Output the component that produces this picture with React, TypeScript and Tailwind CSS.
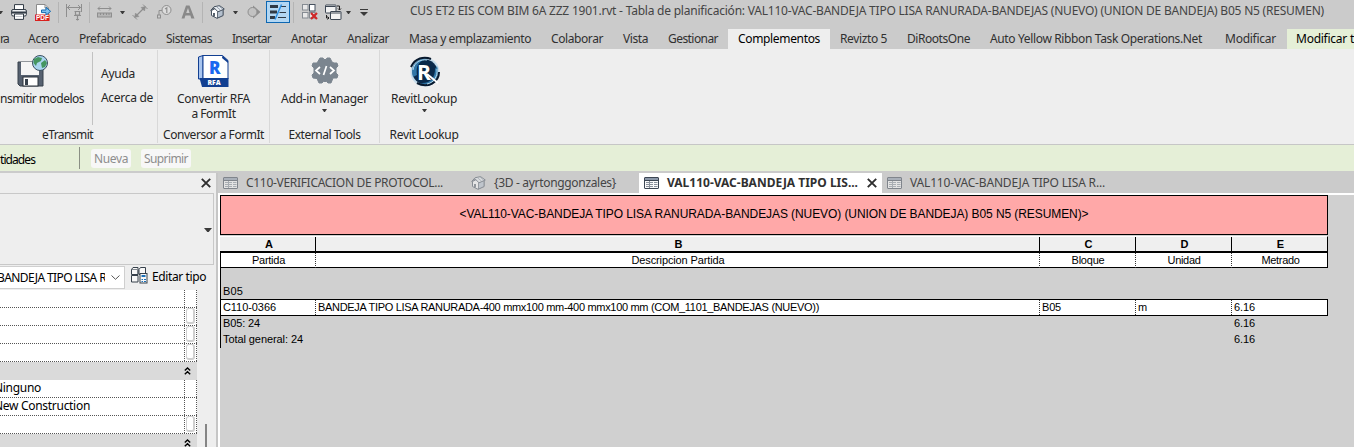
import { useLayoutEffect, useRef, useState } from "react";
import type { ReactNode } from "react";

/* A single-line label that is tracked so that it fills exactly `w` pixels. */
function Label({ w, children, className = "" }: { w: number; children: string; className?: string }) {
  const ref = useRef<HTMLSpanElement>(null);
  const [spacing, setSpacing] = useState(0);
  useLayoutEffect(() => {
    if (ref.current) {
      const natural = ref.current.getBoundingClientRect().width;
      setSpacing((w - natural) / children.length);
    }
  }, [w, children]);
  return (
    <span className={`inline-block shrink-0 whitespace-pre ${className}`} style={{ width: w }}>
      <span ref={ref} style={{ letterSpacing: spacing }}>
        {children}
      </span>
    </span>
  );
}

const Sep = ({ className = "" }: { className?: string }) => (
  <div className={`h-[21px] w-px shrink-0 bg-[#b4b4b4] ${className}`} />
);

const Caret = ({ className = "", size = 5 }: { className?: string; size?: number }) => (
  <svg className={`shrink-0 ${className}`} width={size} height={size > 5 ? 4 : 3} viewBox="0 0 6 3" preserveAspectRatio="none">
    <path d="M0 0H6L3.500 3H2.500Z" fill="#3a3a3a" />
  </svg>
);

const ScheduleIcon = ({ dim = false }: { dim?: boolean }) => (
  <svg className="shrink-0" width="15" height="12" viewBox="0 0 15 12" opacity={dim ? 0.52 : 1}>
    <rect x="0.500" y="0.500" width="14" height="11" rx="0.500" fill="#fafafa" stroke="#3c4653" />
    <rect x="1" y="1" width="13" height="2" fill="#8b98a9" />
    <path d="M1 3.500H14" stroke="#3c4653" />
    <path d="M2 5.500H5M6 5.500H9M10 5.500H13.500M2 7.500H5M6 7.500H9M10 7.500H13.500M2 9.500H5M6 9.500H9M10 9.500H13.500" stroke="#8a929c" />
    <path d="M5.500 4V11" stroke="#8a929c" />
  </svg>
);

const CloseIcon = ({ className = "" }: { className?: string }) => (
  <svg className={`shrink-0 ${className}`} width="10" height="10" viewBox="0 0 10 10">
    <path d="M0.800 0.800L9.200 9.200M9.200 0.800L0.800 9.200" stroke="#2e2e2e" strokeWidth="1.900" />
  </svg>
);

const House = ({ dim = false }: { dim?: boolean }) => (
  <svg className="shrink-0" width="15" height="14" viewBox="0 0 15 14" opacity={dim ? 0.5 : 1}>
    <path d="M1.500 5.500V10.500L7 13.300L13 10.500V5L8 2Z" fill="#fff" stroke="#46515e" />
    <path d="M7.500 6.500L13 4.500V10.500L7.500 13Z" fill="#b4c0ce" stroke="#46515e" strokeWidth=".8" />
    <path d="M0.700 5.500L4 1.800L9.500 0.600L14.300 4L8 6.800L4 2.800Z" fill="#e9edf2" stroke="#46515e" />
    <path d="M6.500 1.800L10.500 5M9 1L12.500 4" stroke="#7d8b9b" strokeWidth=".8" />
    <path d="M4 8V11.500" stroke="#46515e" strokeWidth="1.800" />
  </svg>
);

function QuickAccess() {
  return (
    <div className="flex h-6 w-[410px] shrink-0 items-center">
      <Caret className="-ml-0.5" size={5} />
      <svg className="ml-2 shrink-0" width="16" height="16" viewBox="0 0 16 16">
        <path d="M3.500 6V0.600H12.500V6" fill="#fff" stroke="#333c46" />
        <rect x="0.600" y="5.500" width="14.800" height="6.500" rx="1.500" fill="#eceef0" stroke="#333c46" />
        <path d="M1 8.500H15" stroke="#333c46" strokeWidth="2" />
        <path d="M3.500 10H12.500V15.400H3.500Z" fill="#fff" stroke="#333c46" />
        <path d="M4.500 12.500H11.500" stroke="#c4c9cf" />
      </svg>
      <svg className="ml-2 shrink-0" width="16" height="17" viewBox="0 0 16 17">
        <path d="M1.500 11V0.500H10L13.500 4V11" fill="#fff" stroke="#8b8b8b" />
        <path d="M10 0.500V4H13.500" fill="none" stroke="#8b8b8b" />
        <rect x="0" y="10.500" width="14.500" height="6.500" fill="#d9201d" />
        <path d="M6.500 6H11V3.300L15.600 7.300L11 11.300V8.600H6.500Z" fill="#7fc0f0" stroke="#1469ae" />
        <text x="1" y="16.200" fontSize="6.500" fontWeight="700" fill="#fff" fontFamily="Liberation Sans, sans-serif">PDF</text>
      </svg>
      <Sep className="ml-[7px]" />
      <svg className="ml-[7px] shrink-0" width="17" height="17" viewBox="0 0 17 17" fill="none" stroke="#8e8e8e">
        <path d="M0.500 0V13M15.500 0V8M1 3.500H15" />
        <path d="M4 1L1.500 3.500L4 6M12 1L14.500 3.500L12 6" />
        <path d="M8.500 7.500H14.500M9.500 8V11H13.500V8M8 11.500H15M11.500 12V16.500M10 15.500H13" strokeWidth="1.200" />
      </svg>
      <Sep className="ml-[6px]" />
      <svg className="ml-[7px] shrink-0" width="15" height="12" viewBox="0 0 15 12" fill="none" stroke="#8e8e8e">
        <path d="M1 2.500H14M3 0.500L1 2.500L3 4.500M12 0.500L14 2.500L12 4.500" />
        <rect x="0.500" y="7" width="14" height="4" fill="#b5b5b5" />
        <path d="M3.500 7V9M6.500 7V9M9.500 7V9M12 7V9" />
      </svg>
      <Caret className="ml-2" size={5} />
      <svg className="ml-[7px] shrink-0" width="16" height="16" viewBox="0 0 16 16" fill="none" stroke="#8e8e8e">
        <path d="M3.500 12.500L12.500 3.500" strokeWidth="1.300" />
        <path d="M13.500 2.500L9 3.500L12.500 7ZM2.500 13.500L3.500 9L7 12.500Z" fill="#8e8e8e" strokeWidth=".5" />
        <path d="M0.500 11L5 15.500M11 0.500L15.500 5" />
      </svg>
      <svg className="ml-[9px] shrink-0" width="15" height="14" viewBox="0 0 15 14" fill="none" stroke="#8e8e8e">
        <circle cx="9.500" cy="5" r="4.500" fill="#dcdcdc" />
        <path d="M8 4L9.800 2.800V8" strokeWidth="1.200" />
        <path d="M5 5.500H2V10" />
        <rect x="0.500" y="10" width="3" height="3" />
      </svg>
      <svg className="ml-[9px] shrink-0" width="14" height="14" viewBox="0 0 14 14">
        <path d="M0.500 13.500L5 0.500H8.500L13.500 13.500H10.300L9.400 10.500H4.400L3.500 13.500ZM5.200 8H8.600L7 3Z" fill="#898989" fillRule="evenodd" />
      </svg>
      <Sep className="ml-[7px]" />
      <div className="ml-[7px]"><House /></div>
      <Caret className="ml-2" size={5} />
      <svg className="ml-[9px] shrink-0" width="14" height="14" viewBox="0 0 14 14">
        <path d="M6 0.500L13.500 7L6 13.500Z" fill="#8e8e8e" />
        <circle cx="5.500" cy="7" r="4.500" fill="#c2c2c2" stroke="#8e8e8e" />
      </svg>
      <svg className="ml-[5px] shrink-0" width="24" height="22" viewBox="0 0 24 22">
        <rect x="0.500" y="0.500" width="23" height="21" fill="#b3d7f3" stroke="#0d67b2" />
        <path d="M4 5.500H12" stroke="#303a45" strokeWidth="3" />
        <path d="M4 11H11" stroke="#303a45" strokeWidth="3" />
        <path d="M4 16.500H9" stroke="#303a45" strokeWidth="3" />
        <path d="M15 5.500H20M13.500 11.500H20M12 16.500H20" stroke="#303a45" />
        <path d="M9 18.500L15.500 3.500" stroke="#2a8de0" strokeWidth="1.400" />
      </svg>
      <Sep className="ml-[3px]" />
      <svg className="ml-2 shrink-0" width="16" height="16" viewBox="0 0 16 16">
        <g fill="#e8e8e8" stroke="#858b92">
          <rect x="0.500" y="0.500" width="5.500" height="5.500" />
          <rect x="7.500" y="0.500" width="5.500" height="6.500" fill="#fff" stroke="#46515e" />
          <rect x="0.500" y="8.500" width="5.500" height="5.500" />
          <rect x="7.500" y="8.500" width="5.500" height="5.500" />
        </g>
        <path d="M9 9L15 15M15 9L9 15" stroke="#cf2727" strokeWidth="2.200" />
      </svg>
      <svg className="ml-[7px] shrink-0" width="17" height="17" viewBox="0 0 17 17">
        <rect x="0.500" y="1" width="10.500" height="8" rx="0.500" fill="#f2f2f2" stroke="#3c4653" />
        <path d="M1 2.500H10.500" stroke="#3c4653" />
        <rect x="5.500" y="7.500" width="10.500" height="8" rx="0.500" fill="#f2f2f2" stroke="#3c4653" />
        <path d="M6 9H15.500" stroke="#3c4653" />
        <path d="M12 2H14.500V6M13 4.500L14.500 6L16 4.500M1.500 11V14H4M2.500 12.500L4 14L2.500 15.500" fill="none" stroke="#222" />
      </svg>
      <Caret className="ml-1" size={5} />
      <svg className="ml-[9px] shrink-0" width="8" height="7" viewBox="0 0 8 7">
        <path d="M0 0.500H8" stroke="#3a3a3a" />
        <path d="M0 3H8L4 7Z" fill="#3a3a3a" />
      </svg>
    </div>
  );
}

const ribbonTabs: [string, number][] = [
  ["Acero", 31],
  ["Prefabricado", 67],
  ["Sistemas", 46],
  ["Insertar", 39],
  ["Anotar", 36],
  ["Analizar", 42],
  ["Masa y emplazamiento", 122],
  ["Colaborar", 52],
  ["Vista", 25],
  ["Gestionar", 50],
];

function RibbonTabs() {
  return (
    <div className="flex h-[25px] items-end text-[#303030]">
      <div className="flex h-5 items-center gap-5">
        <Label w={8}>ra</Label>
        {ribbonTabs.map(([name, w]) => (
          <Label key={name} w={w}>{name}</Label>
        ))}
      </div>
      <div className="ml-[10px] flex h-5 w-[102px] items-center bg-[#eee] pl-[10px] text-black">
        <Label w={82}>Complementos</Label>
      </div>
      <div className="flex h-5 items-center gap-5 pl-[10px]">
        <Label w={47}>Revizto 5</Label>
        <Label w={63}>DiRootsOne</Label>
        <Label w={212}>Auto Yellow Ribbon Task Operations.Net</Label>
        <Label w={51} className="ml-[3px]">Modificar</Label>
      </div>
      <div className="ml-[11px] flex h-5 grow items-center overflow-hidden bg-[#e5efd7] pl-[9px] text-black">
        <Label w={58}>Modificar t</Label>
      </div>
    </div>
  );
}

function Panel({ title, titleW, className, children }: { title: string; titleW: number; className: string; children: ReactNode }) {
  return (
    <div className={`flex shrink-0 flex-col items-center ${className}`}>
      <div className="flex h-[76px] flex-col items-center">{children}</div>
      <div className="flex h-[19px] items-center">
        <Label w={titleW}>{title}</Label>
      </div>
    </div>
  );
}

const Divider = () => <div className="mt-px h-[93px] w-px shrink-0 bg-[#d8d8d8]" />;

function Ribbon() {
  return (
    <div className="flex h-24 border-b border-[#c6c6c6] bg-[#eee] text-[#262626]">
      <div className="flex w-[157px] shrink-0 flex-col">
        <div className="flex h-[76px]">
          <div className="flex w-[92px] flex-col">
            <svg className="mt-1.5 ml-[17px]" width="32" height="32" viewBox="0 0 32 32">
              <path d="M1 7H26V31H3L1 29Z" fill="#566170" stroke="#36404b" />
              <rect x="4" y="7" width="18" height="13" fill="#f5f5f5" />
              <rect x="6" y="22" width="15" height="9" fill="#fff" stroke="#2a323b" />
              <rect x="8" y="24" width="3" height="6" fill="#36404b" />
              <circle cx="23" cy="8" r="7.500" fill="#a9d5ef" stroke="#3b4f60" />
              <path d="M17 4L21 2L25 3L24 6L20 8L19 11L16.500 8ZM24 8L28 5L30 8L28 12L25 13Z" fill="#459660" />
            </svg>
            <div className="flex h-6 items-center">
              <Label w={84}>nsmitir modelos</Label>
            </div>
          </div>
          <div className="mt-[3px] h-[73px] w-px shrink-0 bg-[#c2c2c2]" />
          <div className="flex flex-col pt-[13px] pl-2">
            <div className="flex h-6 items-center"><Label w={34}>Ayuda</Label></div>
            <div className="flex h-6 items-center"><Label w={52}>Acerca de</Label></div>
          </div>
        </div>
        <div className="flex h-[19px] items-center pl-[42px]">
          <Label w={51}>eTransmit</Label>
        </div>
      </div>
      <Divider />
      <Panel title="Conversor a FormIt" titleW={101} className="w-[111px]">
        <svg className="mt-1.5" width="31" height="33" viewBox="0 0 31 33">
          <path d="M0.500 2L5 0.500V24H0.500Z" fill="#a9c5ef" stroke="#123f91" />
          <path d="M5 0.500H24.500L30 5.500V24H5Z" fill="#fff" stroke="#123f91" />
          <path d="M24.500 0.500L30 5.500V8L24 3Z" fill="#123f91" />
          <path d="M1.500 23H30.500V32H4Z" fill="#123f91" />
          <text x="11" y="18.500" fontFamily="Open Sans, sans-serif" fontWeight="800" fontSize="17" fill="#1a68f0">R</text>
          <text x="9.500" y="30" fontFamily="Open Sans, sans-serif" fontWeight="800" fontSize="6.800" fill="#fff">RFA</text>
        </svg>
        <div className="mt-[3px] flex h-[15px] items-center"><Label w={73}>Convertir RFA</Label></div>
        <div className="flex h-[15px] items-center"><Label w={44}>a FormIt</Label></div>
      </Panel>
      <Divider />
      <Panel title="External Tools" titleW={72} className="w-[109px]">
        <svg className="mt-[8px]" width="28" height="27" viewBox="0 0 28 27">
          <path d="M9 1H12L13 2.500H15L16 1H19L21 5L23 6L26 6L27 9L25 11V16L27 18L26 21L22 21L20 26L17 26L15.500 24.500H12.500L11 26L8 26L6 21.500L2 21L1 18L3 16V11L1 9L2 6L6 6Z" fill="#7b858f" stroke="#7b858f" strokeLinejoin="round" />
          <path d="M9 10L5 13.500L9 17M19 10L23 13.500L19 17M15.500 9L12.500 18" fill="none" stroke="#fff" strokeWidth="1.700" />
        </svg>
        <div className="mt-[7px] flex h-[15px] items-center"><Label w={87}>Add-in Manager</Label></div>
        <Caret className="mt-[3px]" size={5} />
      </Panel>
      <Divider />
      <Panel title="Revit Lookup" titleW={69} className="w-[88px]">
        <svg className="mt-1.5" width="33" height="33" viewBox="0 0 33 33">
          <circle cx="17" cy="17" r="14.500" fill="#c5dceb" />
          <circle cx="17" cy="17" r="12.500" fill="#09294a" />
          <path d="M5 22C1 8 13 1 23 4C9 4 8 13 9 20ZM29 11C33 24 23 32 12 28C23 29 27 22 27 14Z" fill="#2f76a7" />
          <path d="M3 12C7 3 16 1 23 4M31 17C31 27 20 34 9 28" fill="none" stroke="#07182c" strokeWidth="2" />
          <path d="M5 15C6 7 13 4 19 5M29 14C30 22 25 28 19 29" fill="none" stroke="#b8dcf0" />
          <text x="9" y="24.500" fontFamily="Open Sans, sans-serif" fontWeight="700" fontSize="21" fill="#fff">R</text>
          <path d="M19 19L30 28" stroke="#fff" strokeWidth="1.800" />
        </svg>
        <div className="mt-[3px] flex h-[15px] items-center"><Label w={66}>RevitLookup</Label></div>
        <Caret className="mt-[3px]" size={5} />
      </Panel>
    </div>
  );
}

function OptionsBar() {
  return (
    <div className="flex h-[28px] items-center border-b-2 border-[#cbcbcb] bg-[#e5efd7] pt-px">
      <div className="pt-0.5 text-black">
        <Label w={35}>tidades</Label>
      </div>
      <div className="ml-11 h-[22px] w-px bg-[#8a8f84]" />
      <div className="ml-[11px] flex h-[19px] w-10 items-center justify-center rounded-[3px] bg-[#f7f7f7] pt-px text-[#8d8d8d]">
        <Label w={34}>Nueva</Label>
      </div>
      <div className="ml-[10px] flex h-[19px] w-[50px] items-center justify-center rounded-[3px] bg-[#f7f7f7] pt-px text-[#8d8d8d]">
        <Label w={44}>Suprimir</Label>
      </div>
    </div>
  );
}

function PropertyRow({ text, w = 0, button = false, clip = 0 }: { text?: string; w?: number; button?: boolean; clip?: number }) {
  return (
    <div className="flex h-[18px] shrink-0 border-b border-dotted border-[#555] bg-white">
      <div className="flex w-[184px] items-center overflow-hidden text-black">
        {text && (
          <div className="-mt-px" style={{ marginLeft: -clip }}>
            <Label w={w}>{text}</Label>
          </div>
        )}
      </div>
      <div className="flex w-[13px] items-center justify-center border-x border-dotted border-[#555]">
        {button && <div className="h-4 w-[9px] rounded-[3px] border border-r-2 border-b-2 border-[#cfcfcf] bg-white" />}
      </div>
    </div>
  );
}

const GroupRow = () => (
  <div className="flex h-[18px] shrink-0 items-center justify-end bg-[#dadada] pr-[6px]">
    <svg width="7" height="8" viewBox="0 0 7 8">
      <path d="M0.800 3.500L3.500 1L6.200 3.500M0.800 7.300L3.500 4.800L6.200 7.300" fill="none" stroke="#000" strokeWidth="1.400" />
    </svg>
  </div>
);

function Properties() {
  return (
    <div className="flex w-[218px] shrink-0 flex-col overflow-hidden border-r-2 border-[#c6c6c6] bg-[#eee]">
      <div className="flex h-5 shrink-0 items-center justify-end pr-[5px]">
        <CloseIcon />
      </div>
      <div className="mr-[2px] flex h-[72px] shrink-0 items-center justify-end border-y border-r border-[#c8c8c8] pt-0.5 pr-px">
        <Caret size={8} />
      </div>
      <div className="flex h-[25px] shrink-0 items-start pt-px">
        <div className="flex h-[23px] w-[125px] items-center border border-l-0 border-[#cfcfcf] bg-white text-black">
          <div className="flex w-[105px] overflow-hidden">
            <Label w={109} className="-ml-[3px]">BANDEJA TIPO LISA R</Label>
          </div>
          <svg className="ml-[6px]" width="9" height="5" viewBox="0 0 9 5">
            <path d="M0.500 0.500L4.500 4.300L8.500 0.500" fill="none" stroke="#555" />
          </svg>
        </div>
        <svg className="mt-[1px] ml-1.5" width="17" height="17" viewBox="0 0 17 17">
          <g fill="#f7f7f7" stroke="#36404b">
            <path d="M0.500 2.500L2 0.500H7V7.500H0.500ZM8 2.500L9.500 0.500H14.500V7.500H8ZM0.500 8.500H7V15H0.500Z" />
            <path d="M7 2.500V7M0.500 2.500H6" strokeWidth=".6" />
            <rect x="9" y="6.500" width="7" height="9.500" />
          </g>
          <rect x="10.500" y="8" width="4" height="2" fill="#1b70b8" />
          <path d="M10.500 12.500H12M13 12.500H15M10.500 14.500H12M13 14.500H15" stroke="#1b70b8" />
        </svg>
        <div className="mt-px ml-1 flex h-[19px] items-center text-black">
          <Label w={54}>Editar tipo</Label>
        </div>
      </div>
      <div className="flex grow items-stretch justify-between">
        <div className="flex h-[157px] w-[197px] flex-col overflow-hidden">
          <PropertyRow />
          <PropertyRow button />
          <PropertyRow button />
          <PropertyRow button />
          <GroupRow />
          <PropertyRow text="Ninguno" w={47} clip={6} />
          <PropertyRow text="New Construction" w={96} clip={6} />
          <PropertyRow button />
          <GroupRow />
        </div>
        <div className="mt-[134px] mr-[9px] h-6 w-0.5 bg-[#858585]" />
      </div>
    </div>
  );
}

function DocTabs() {
  return (
    <div className="flex h-5 shrink-0 items-center bg-[#cbcbcb] pr-1 text-[#454545]">
      <div className="flex w-[248px] items-center gap-2 pl-[5px]">
        <ScheduleIcon dim />
        <Label w={197}>C110-VERIFICACION DE PROTOCOL...</Label>
      </div>
      <div className="flex w-[173px] items-center gap-2 pl-[5px]">
        <House dim />
        <Label w={122}>{"{3D - ayrtonggonzales}"}</Label>
      </div>
      <div className="flex h-5 w-[243px] items-center bg-white pl-[5px] font-bold text-[#303030]">
        <ScheduleIcon />
        <Label w={191} className="ml-2">VAL110-VAC-BANDEJA TIPO LIS...</Label>
        <CloseIcon className="ml-[9px]" />
      </div>
      <div className="flex items-center gap-2 pl-[5px]">
        <ScheduleIcon dim />
        <Label w={195}>VAL110-VAC-BANDEJA TIPO LISA R...</Label>
      </div>
    </div>
  );
}

const COLS = "grid grid-cols-[95px_724px_96px_96px_96px]";

const columns: [string, string, number][] = [
  ["A", "Partida", 33],
  ["B", "Descripcion Partida", 93],
  ["C", "Bloque", 33],
  ["D", "Unidad", 33],
  ["E", "Metrado", 38],
];

const item: [string, number][] = [
  ["C110-0366", 53],
  ["BANDEJA TIPO LISA RANURADA-400 mmx100 mm-400 mmx100 mm (COM_1101_BANDEJAS (NUEVO))", 501],
  ["B05", 19],
  ["m", 9],
  ["6.16", 21],
];

function Schedule() {
  return (
    <div className="flex grow flex-col border-t-2 border-l-2 border-white bg-[#d0d0d0] font-['Liberation_Sans',Arial,sans-serif] text-[11px] leading-[15px] text-black">
      <div className="flex h-10 w-[1108px] items-center justify-center border border-black bg-[#ffa8a8] text-[12px]">
        <Label w={629}>{"<VAL110-VAC-BANDEJA TIPO LISA RANURADA-BANDEJAS (NUEVO) (UNION DE BANDEJA) B05 N5 (RESUMEN)>"}</Label>
      </div>
      <div className={`${COLS} h-[18px] w-[1108px] border-t border-b-2 border-t-[#d0d0d0] border-b-black bg-[#efefef] font-bold`}>
        {columns.map(([letter]) => (
          <div key={letter} className="-mr-px flex items-center justify-center border-t border-r border-t-white border-r-black pl-[3px]">
            {letter}
          </div>
        ))}
      </div>
      <div className="h-[95px] w-[1108px] border-l border-black">
        <div className={`${COLS} -ml-px h-[15px] w-[1108px] border-x border-b border-black bg-white`}>
          {columns.map(([letter, name, w], i) => (
            <div key={letter} className={`flex items-center justify-center pl-px ${i < 4 ? "border-r border-dotted border-[#333]" : ""}`}>
              <Label w={w}>{name}</Label>
            </div>
          ))}
        </div>
        <div className="flex h-[31px] items-end pl-0.5">
          <Label w={20}>B05</Label>
        </div>
        <div className={`${COLS} -ml-px h-[17px] w-[1108px] border border-black bg-white`}>
          {item.map(([value, w], i) => (
            <div key={value} className={`flex items-center pl-0.5 ${i < 4 ? "border-r border-dotted border-[#333]" : ""}`}>
              <Label w={w}>{value}</Label>
            </div>
          ))}
        </div>
        <div className="flex h-4 items-center justify-between pr-[73px] pl-0.5">
          <Label w={37}>B05: 24</Label>
          <Label w={21}>6.16</Label>
        </div>
        <div className="flex h-4 items-center justify-between pr-[73px] pl-0.5">
          <Label w={80}>Total general: 24</Label>
          <Label w={21}>6.16</Label>
        </div>
      </div>
    </div>
  );
}

export default function App() {
  return (
    <div className="flex h-[447px] w-[1354px] flex-col overflow-hidden bg-[#cbcbcb] font-['Noto_Sans','Open_Sans',sans-serif] text-[12px] leading-[15px]">
      <div className="flex h-6 shrink-0 items-start text-[#444]">
        <QuickAccess />
        <div className="flex h-[20px] items-center">
          <Label w={914}>CUS ET2 EIS COM BIM 6A ZZZ 1901.rvt - Tabla de planificación: VAL110-VAC-BANDEJA TIPO LISA RANURADA-BANDEJAS (NUEVO) (UNION DE BANDEJA) B05 N5 (RESUMEN)</Label>
        </div>
      </div>
      <RibbonTabs />
      <Ribbon />
      <OptionsBar />
      <div className="flex min-h-0 grow">
        <Properties />
        <div className="flex min-w-0 grow flex-col">
          <DocTabs />
          <Schedule />
        </div>
      </div>
    </div>
  );
}
